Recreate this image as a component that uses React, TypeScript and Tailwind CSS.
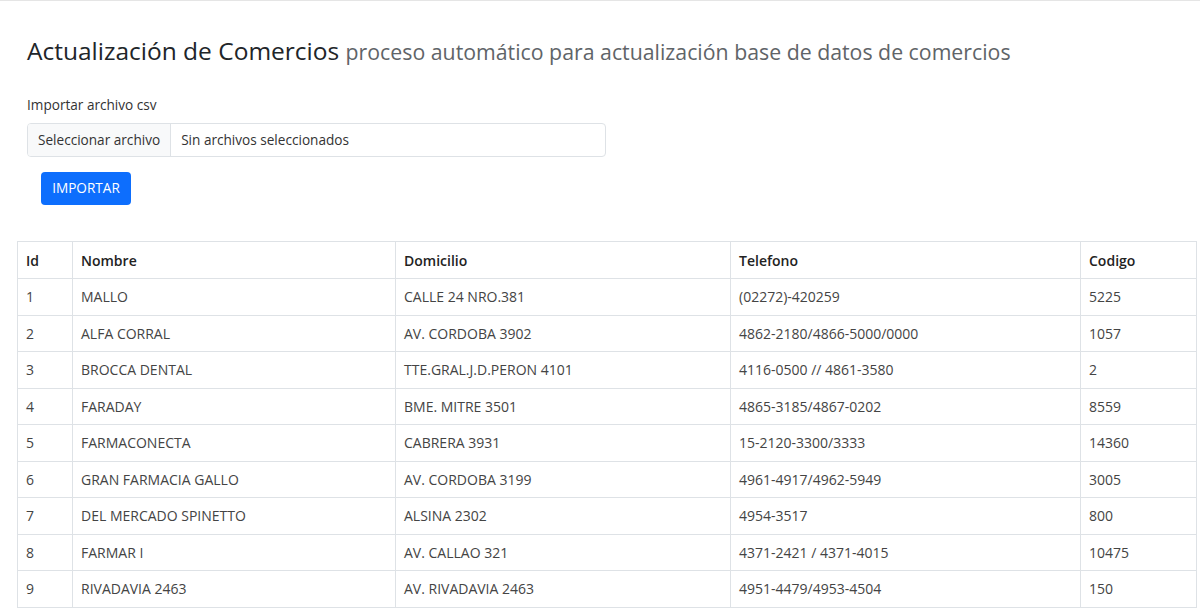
const rows = [
  ["1", "MALLO", "CALLE 24 NRO.381", "(02272)-420259", "5225"],
  ["2", "ALFA CORRAL", "AV. CORDOBA 3902", "4862-2180/4866-5000/0000", "1057"],
  ["3", "BROCCA DENTAL", "TTE.GRAL.J.D.PERON 4101", "4116-0500 // 4861-3580", "2"],
  ["4", "FARADAY", "BME. MITRE 3501", "4865-3185/4867-0202", "8559"],
  ["5", "FARMACONECTA", "CABRERA 3931", "15-2120-3300/3333", "14360"],
  ["6", "GRAN FARMACIA GALLO", "AV. CORDOBA 3199", "4961-4917/4962-5949", "3005"],
  ["7", "DEL MERCADO SPINETTO", "ALSINA 2302", "4954-3517", "800"],
  ["8", "FARMAR I", "AV. CALLAO 321", "4371-2421 / 4371-4015", "10475"],
  ["9", "RIVADAVIA 2463", "AV. RIVADAVIA 2463", "4951-4479/4953-4504", "150"],
];

const cols = ["w-[55px]", "w-[323px]", "w-[335px]", "w-[350px]", ""];

export default function App() {
  return (
    <div className="h-[608px] overflow-hidden border-t border-[#e5e5e5] bg-white font-['Open_Sans',sans-serif] text-[#212529]">
      <div className="px-[27px] pt-[32px]">
        <h3 className="text-[24.5px] font-medium leading-[36px] text-[#212529]">
          Actualización de Comercios{" "}
          <small className="text-[21.3px] font-medium text-[#5f6468]">proceso automático para actualización base de datos de comercios</small>
        </h3>
        <label className="mt-[25px] block text-[13.6px] leading-[20px] text-[#333]">Importar archivo csv</label>
        <div className="mt-[8px] flex h-[34px] w-[579px] overflow-hidden rounded-[4px] border border-[#dee2e6] text-[13.6px] text-[#333]">
          <span className="flex items-center border-r border-[#dee2e6] bg-[#f8f9fa] px-[10px]">Seleccionar archivo</span>
          <span className="flex items-center px-[10px]">Sin archivos seleccionados</span>
        </div>
        <button className="ml-[14px] mt-[15px] h-[33px] w-[90px] rounded-[4px] bg-[#0d6efd] text-[13.6px] text-white">IMPORTAR</button>
      </div>
      <div className="px-[17px] pt-[36px] pr-[3px]">
        <table className="w-full border-collapse text-[14px]">
          <thead>
            <tr className="h-[37px]">
              {["Id", "Nombre", "Domicilio", "Telefono", "Codigo"].map((h, i) => (
                <th key={h} className={`${cols[i]} border border-[#dee2e6] px-[8px] text-left font-semibold text-[#222]`}>{h}</th>
              ))}
            </tr>
          </thead>
          <tbody>
            {rows.map((r) => (
              <tr key={r[0]} className="h-[36.5px]">
                {r.map((c, i) => (
                  <td key={i} className="border border-[#dee2e6] px-[8px] text-[#444]">{c}</td>
                ))}
              </tr>
            ))}
          </tbody>
        </table>
      </div>
    </div>
  );
}
